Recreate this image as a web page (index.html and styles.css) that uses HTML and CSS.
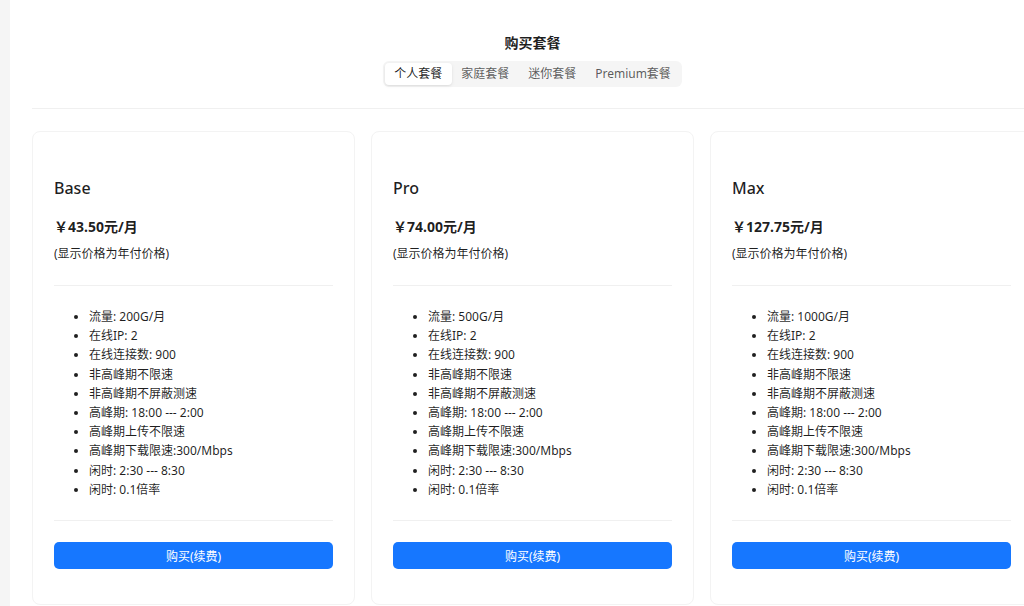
FILE: index.html
```html
<!DOCTYPE html>
<html lang="zh">
<head>
<meta charset="utf-8">
<title>购买套餐</title>
<link rel="stylesheet" href="styles.css">
</head>
<body>
<div class="page">
  <div class="side"></div>
  <main class="main">
    <div class="content">
      <header class="head">
        <div class="title">购买套餐</div>
        <div class="seg">
          <div class="seg-item active">个人套餐</div>
          <div class="seg-item">家庭套餐</div>
          <div class="seg-item">迷你套餐</div>
          <div class="seg-item">Premium套餐</div>
        </div>
      </header>
      <div class="rule"></div>
      <section class="cards">
        <div class="card">
          <div class="name">Base</div>
          <div class="price">￥43.50元/月</div>
          <div class="note">(显示价格为年付价格)</div>
          <div class="line"></div>
          <ul class="feats">
            <li>流量: 200G/月</li>
            <li>在线IP: 2</li>
            <li>在线连接数: 900</li>
            <li>非高峰期不限速</li>
            <li>非高峰期不屏蔽测速</li>
            <li>高峰期: 18:00 --- 2:00</li>
            <li>高峰期上传不限速</li>
            <li>高峰期下载限速:300/Mbps</li>
            <li>闲时: 2:30 --- 8:30</li>
            <li>闲时: 0.1倍率</li>
          </ul>
          <div class="line"></div>
          <button class="buy">购买(续费)</button>
        </div>
        <div class="card">
          <div class="name">Pro</div>
          <div class="price">￥74.00元/月</div>
          <div class="note">(显示价格为年付价格)</div>
          <div class="line"></div>
          <ul class="feats">
            <li>流量: 500G/月</li>
            <li>在线IP: 2</li>
            <li>在线连接数: 900</li>
            <li>非高峰期不限速</li>
            <li>非高峰期不屏蔽测速</li>
            <li>高峰期: 18:00 --- 2:00</li>
            <li>高峰期上传不限速</li>
            <li>高峰期下载限速:300/Mbps</li>
            <li>闲时: 2:30 --- 8:30</li>
            <li>闲时: 0.1倍率</li>
          </ul>
          <div class="line"></div>
          <button class="buy">购买(续费)</button>
        </div>
        <div class="card">
          <div class="name">Max</div>
          <div class="price">￥127.75元/月</div>
          <div class="note">(显示价格为年付价格)</div>
          <div class="line"></div>
          <ul class="feats">
            <li>流量: 1000G/月</li>
            <li>在线IP: 2</li>
            <li>在线连接数: 900</li>
            <li>非高峰期不限速</li>
            <li>非高峰期不屏蔽测速</li>
            <li>高峰期: 18:00 --- 2:00</li>
            <li>高峰期上传不限速</li>
            <li>高峰期下载限速:300/Mbps</li>
            <li>闲时: 2:30 --- 8:30</li>
            <li>闲时: 0.1倍率</li>
          </ul>
          <div class="line"></div>
          <button class="buy">购买(续费)</button>
        </div>
      </section>
    </div>
  </main>
</div>
</body>
</html>
```

FILE: styles.css
```css
* { box-sizing: border-box; }
html, body {
  margin: 0;
  padding: 0;
  overflow: hidden;
  background: #f5f5f5;
  font-family: "Noto Sans", "Noto Sans CJK SC", sans-serif;
  color: rgba(0, 0, 0, 0.88);
}
.page {
  display: flex;
  width: 1024px;
  height: 606px;
}
.side {
  width: 10px;
  flex-shrink: 0;
  background: #f5f5f5;
}
.main {
  flex: 1;
  background: #fff;
  padding-left: 22px;
  overflow: hidden;
}
.content {
  width: 1001px;
}
.head {
  display: flex;
  flex-direction: column;
  align-items: center;
  padding-top: 32px;
}
.title {
  font-size: 14px;
  font-weight: 700;
  line-height: 22px;
}
.seg {
  margin-top: 7px;
  display: flex;
  padding: 2px;
  background: #f5f5f5;
  border-radius: 6px;
}
.seg-item {
  font-size: 12px;
  line-height: 22px;
  padding: 0 9.5px;
  color: rgba(0, 0, 0, 0.65);
  border-radius: 4px;
}
.seg-item.active {
  background: #fff;
  color: rgba(0, 0, 0, 0.88);
  box-shadow: 0 1px 2px rgba(0, 0, 0, 0.06), 0 1px 4px rgba(0, 0, 0, 0.06);
}
.rule {
  margin-top: 21px;
  height: 1px;
  background: #f0f0f0;
  margin-right: -40px;
}
.cards {
  margin-top: 22px;
  display: grid;
  grid-template-columns: repeat(3, 323px);
  gap: 16px;
}
.card {
  border: 1px solid #f3f3f3;
  border-radius: 8px;
  padding: 44px 21px 35px;
  background: #fff;
}
.name {
  font-size: 16px;
  font-weight: 500;
  line-height: 24px;
}
.price {
  margin-top: 16px;
  font-size: 14px;
  font-weight: 700;
  line-height: 22px;
}
.note {
  margin-top: 6px;
  font-size: 12px;
  line-height: 20px;
}
.line {
  height: 1px;
  background: #f0f0f0;
  margin: 21px 0;
}
.feats {
  margin: 18px 0 21px;
  padding-left: 35px;
  font-size: 12px;
  line-height: 19.2px;
}
.buy {
  display: block;
  width: 100%;
  height: 27px;
  border: none;
  border-radius: 5px;
  background: #1677ff;
  color: #fff;
  font-family: inherit;
  font-size: 12px;
  padding: 0;
}
```
